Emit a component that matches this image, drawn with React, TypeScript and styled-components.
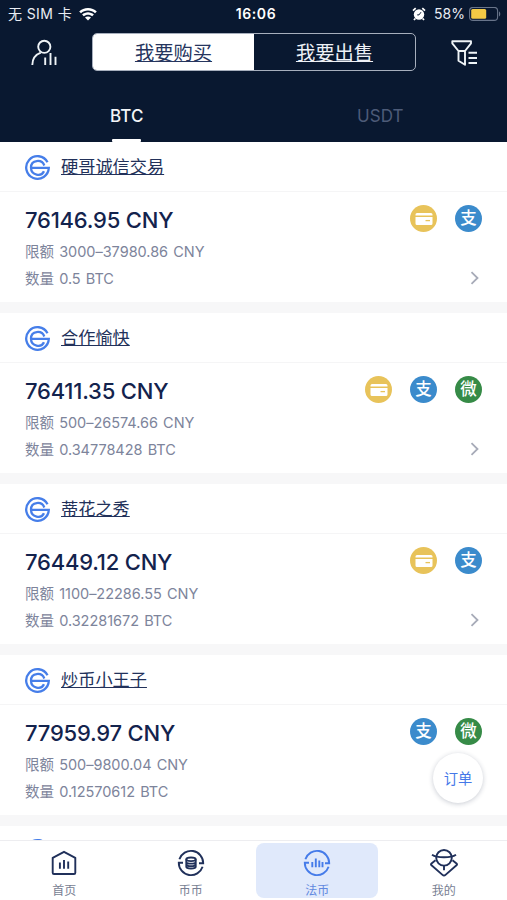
import React from 'react';
import styled, { createGlobalStyle } from 'styled-components';

const GlobalStyle = createGlobalStyle`
  * { box-sizing: border-box; }
  body {
    margin: 0;
    background: #f7f7f8;
    font-family: Inter, "Noto Sans CJK SC", sans-serif;
    color: #13234d;
  }
  svg { display: block; flex: none; }
`;

const Screen = styled.div`
  width: 507px;
  height: 900px;
  overflow: hidden;
  display: flex;
  flex-direction: column;
  position: relative;
`;

const Header = styled.header`
  height: 142px;
  flex: none;
  background: #091830;
  color: #fff;
`;

const StatusBar = styled.div`
  height: 28px;
  padding: 0 6px 0 8px;
  display: grid;
  grid-template-columns: 1fr auto 1fr;
  align-items: center;
  font-size: 14px;
  line-height: 28px;
  color: #e9edf4;
`;

const StatusGroup = styled.div<{ $end?: boolean }>`
  display: flex;
  align-items: center;
  gap: ${p => (p.$end ? 0 : 7)}px;
  justify-content: ${p => (p.$end ? 'flex-end' : 'flex-start')};
  letter-spacing: ${p => (p.$end ? 0 : 0.4)}px;
  white-space: pre;
`;

const Clock = styled.span`
  margin-left: 3px;
  font-weight: 600;
  letter-spacing: 0.55px;
  color: #fff;
`;

const Percent = styled.span`
  margin: 0 3px 0 8px;
`;

const ToolRow = styled.div`
  height: 49px;
  padding: 5px 27px 0 30px;
  display: flex;
  align-items: flex-start;
`;

const IconButton = styled.div`
  flex: none;
  padding-top: 6px;
`;

const Segments = styled.div`
  width: 325px;
  height: 38px;
  margin: 0 34px;
  display: flex;
  border: 1px solid #a7afbd;
  border-radius: 5px;
  overflow: hidden;
`;

const Segment = styled.div<{ $active?: boolean }>`
  flex: 1;
  background: ${p => (p.$active ? '#fff' : 'transparent')};
  color: ${p => (p.$active ? '#26355e' : '#eef1f6')};
  font-size: 19.3px;
  line-height: 38px;
  text-align: center;
  text-decoration: underline;
  text-decoration-thickness: 1px;
  text-underline-offset: 1px;
  text-decoration-skip-ink: none;
`;

const CoinTabs = styled.div`
  height: 65px;
  display: flex;
`;

const CoinTab = styled.div<{ $active?: boolean }>`
  flex: 1;
  display: flex;
  flex-direction: column;
  align-items: center;
  justify-content: space-between;
  padding-top: 28px;
  font-size: 17px;
  line-height: 23px;
  font-weight: ${p => (p.$active ? 500 : 400)};
  color: ${p => (p.$active ? '#f3f5f8' : '#4d5b78')};
  &::after {
    content: '';
    width: 29px;
    height: 3px;
    border-radius: 1px;
    background: ${p => (p.$active ? '#fff' : 'transparent')};
  }
`;

const List = styled.main`
  flex: 1;
  min-height: 0;
  overflow: hidden;
  display: flex;
  flex-direction: column;
  gap: 11px;
`;

const Card = styled.article`
  height: 160px;
  flex: none;
  background: #fff;
`;

const Seller = styled.div`
  height: 50px;
  padding: 1px 25px 0;
  display: flex;
  align-items: center;
  gap: 11px;
  border-bottom: 1px solid #f5f5f6;
`;

const SellerName = styled.span`
  font-size: 17.2px;
  line-height: 24px;
  color: #22315a;
  text-decoration: underline;
  text-decoration-thickness: 1px;
  text-underline-offset: 1px;
  text-decoration-skip-ink: none;
`;

const Offer = styled.div`
  height: 110px;
  padding: 13px 25px 0;
  display: flex;
  justify-content: space-between;
`;

const Price = styled.div`
  height: 30px;
  font-size: 22px;
  line-height: 30px;
  font-weight: 500;
  letter-spacing: -0.2px;
  white-space: nowrap;
`;

const Detail = styled.div`
  height: 27px;
  font-size: 14.5px;
  line-height: 34px;
  letter-spacing: -0.02px;
  word-spacing: 1.1px;
  color: #7d849b;
  white-space: nowrap;
`;

const Side = styled.div`
  display: flex;
  flex-direction: column;
  align-items: flex-end;
  justify-content: space-between;
  padding-bottom: 17px;
`;

const Methods = styled.div`
  display: flex;
  gap: 18px;
`;

const More = styled.div`
  padding-right: 2px;
`;

const methodColor = { card: '#e8c35a', ali: '#3b8bcc', wechat: '#368b47' };
type Method = keyof typeof methodColor;

const Badge = styled.span<{ $kind: Method }>`
  width: 27px;
  height: 27px;
  border-radius: 50%;
  background: ${p => methodColor[p.$kind]};
  color: #fff;
  display: flex;
  align-items: center;
  justify-content: center;
  font-size: 16.5px;
  line-height: 27px;
  font-weight: 500;
`;

const OrderButton = styled.div`
  position: absolute;
  left: 433px;
  top: 753px;
  width: 50px;
  height: 50px;
  border-radius: 50%;
  background: #fff;
  box-shadow: 0 1px 5px rgba(30, 40, 70, 0.24);
  color: #4678e8;
  font-size: 14.3px;
  line-height: 52px;
  text-align: center;
`;

const TabBar = styled.nav`
  height: 60px;
  flex: none;
  padding: 2px 0 2px 1px;
  background: #fff;
  border-top: 1px solid #ededf0;
  display: grid;
  grid-template-columns: repeat(4, 1fr);
`;

const TabItem = styled.div<{ $active?: boolean }>`
  width: 122px;
  height: 55px;
  justify-self: center;
  border-radius: 8px;
  background: ${p => (p.$active ? '#e0e9fb' : 'transparent')};
  color: ${p => (p.$active ? '#457be9' : '#20305a')};
  display: flex;
  flex-direction: column;
  align-items: center;
  padding-top: 6px;
`;

const TabLabel = styled.span<{ $active?: boolean }>`
  margin-top: 6px;
  font-size: 12px;
  line-height: 16px;
  color: ${p => (p.$active ? '#6188df' : '#777e92')};
`;

const Wifi = () => (
  <svg width="18" height="13" viewBox="0 0 18 13" fill="#fff">
    <path d="M9 0C5.5 0 2.4 1.300 0.200 3.500L2 5.300C3.800 3.500 6.300 2.500 9 2.500s5.200 1 7 2.800l1.800-1.800C15.600 1.300 12.500 0 9 0Z" />
    <path d="M9 4.300c-2.300 0-4.300.9-5.900 2.300l1.700 1.700C5.900 7.300 7.400 6.700 9 6.700s3.100.6 4.200 1.600l1.700-1.700C13.300 5.200 11.300 4.300 9 4.300Z" />
    <path d="M9 8.400c-1.200 0-2.200.4-3 1.200l3 3 3-3c-.8-.8-1.800-1.200-3-1.200Z" />
  </svg>
);

const Alarm = () => (
  <svg width="14" height="14" viewBox="0 0 14 14">
    <circle cx="7" cy="7.500" r="5.200" fill="#fff" />
    <path d="M1 3.600 3.700 1.200M13 3.600 10.300 1.200M3.300 11.500 2 13M10.700 11.500 12 13" stroke="#fff" strokeWidth="1.800" />
    <path d="M9 5.200 7 7.900H5.200" stroke="#091830" strokeWidth="1" fill="none" />
  </svg>
);

const Battery = () => (
  <svg width="33" height="15" viewBox="0 0 33 15">
    <rect x="1.600" y=".4" width="28" height="13" rx="3.500" fill="none" stroke="#68748a" strokeWidth="1.100" />
    <rect x="3.200" y="2" width="15" height="9.800" rx="1.500" fill="#f3ca45" />
    <path d="M31 4.500c1.700.6 1.700 4.300 0 5Z" fill="#68748a" />
  </svg>
);

const TraderIcon = () => (
  <svg width="28" height="28" viewBox="0 0 28 28" fill="none" stroke="#eff4f7" strokeWidth="1.900">
    <circle cx="14.300" cy="7.800" r="6.100" />
    <path d="M2.300 26c.1-6.200 3.500-10.500 8.500-12.300M15.200 18.500V26M20.500 14v12M25.500 17.800v8.200" />
  </svg>
);

const FilterIcon = () => (
  <svg width="30" height="28" viewBox="0 0 30 28" fill="none" stroke="#eff4f7" strokeWidth="1.900" strokeLinejoin="round">
    <path d="M2.300 2.300h18.700v2L15 12H8.500L2.300 4.300ZM8.500 12v9.800l6.500 4V12M18.500 13.700h8.500M18.500 19h8.500M18.500 24h8.500" />
  </svg>
);

const Avatar = () => (
  <svg width="25" height="25" viewBox="0 0 25 25" fill="none" stroke="#467ee9" strokeWidth="2.300">
    <path d="M22.500 7.200A11.300 11.300 0 1 0 23.800 12.800H6.500" />
    <path d="M19.300 10.500C17 3.900 6 4.500 6 12.500C6 20.500 16.500 22 19 16.300" />
  </svg>
);

const CardIcon = () => (
  <svg width="18" height="14" viewBox="0 0 18 14">
    <path d="M2 1h14a1.500 1.500 0 0 1 1.500 1.500V3.500H.5V2.500A1.500 1.500 0 0 1 2 1ZM.5 5h17v6.500A1.500 1.500 0 0 1 16 13H2A1.500 1.500 0 0 1 .5 11.500Z" fill="#fff" />
    <path d="M10.500 8.600H15" stroke="#e8c35a" strokeWidth="1.300" />
  </svg>
);

const Chevron = () => (
  <svg width="10" height="14" viewBox="0 0 10 14" fill="none" stroke="#a7abb8" strokeWidth="1.800">
    <path d="m1.500 1.200 6 5.800-6 5.800" />
  </svg>
);

const navSvg = { width: 28, height: 28, viewBox: '0 0 28 28', fill: 'none', stroke: 'currentColor', strokeWidth: 1.900 } as const;

const HomeIcon = () => (
  <svg {...navSvg} strokeLinejoin="round">
    <path d="M2.700 8.800 14 2.800l11.300 6v14.900a1.300 1.300 0 0 1-1.300 1.300H4a1.300 1.300 0 0 1-1.300-1.300Z" />
    <path d="M9.900 13.500v6.200M14 11v8.700M18.200 12.500v7.200" />
  </svg>
);

const Ring = () => (
  <>
    <path d="M2.400 10.300A12.200 12.200 0 0 1 26.200 14.300H22" />
    <path d="M25.600 17.700A12.200 12.200 0 0 1 1.800 13.700H6" />
  </>
);

const SpotIcon = () => (
  <svg {...navSvg}>
    <Ring />
    <ellipse cx="14" cy="10.300" rx="4.700" ry="1.800" />
    <path d="M9.300 10.300v7.500c0 2.300 9.400 2.300 9.400 0v-7.500M9.300 12.900c0 2.300 9.400 2.300 9.400 0M9.300 15.400c0 2.300 9.400 2.300 9.400 0" />
  </svg>
);

const FiatIcon = () => (
  <svg {...navSvg}>
    <Ring />
    <path d="M9.300 13v5.300M12.800 9.500v8.800M16.300 11.600v6.700M19.500 13v5.300" />
  </svg>
);

const MineIcon = () => (
  <svg {...navSvg} strokeLinejoin="round">
    <circle cx="14" cy="8.800" r="7.800" />
    <path d="M2 5.800c5 3.300 19 3.300 24 0" />
    <path d="M5.500 11.300 1.500 14.500c-.7.600-.7 1.200 0 1.800l11 9.600c1 .9 2 .9 3 0l11-9.600c.7-.6.700-1.200 0-1.800l-4-3.200M14 16.600v4.700" />
  </svg>
);

interface Listing {
  name: string;
  price: string;
  limit: string;
  amount: string;
  methods: Method[];
  more: boolean;
}

const listings: Listing[] = [
  { name: '硬哥诚信交易', price: '76146.95', limit: '3000–37980.86', amount: '0.5', methods: ['card', 'ali'], more: true },
  { name: '合作愉快', price: '76411.35', limit: '500–26574.66', amount: '0.34778428', methods: ['card', 'ali', 'wechat'], more: true },
  { name: '蒂花之秀', price: '76449.12', limit: '1100–22286.55', amount: '0.32281672', methods: ['card', 'ali'], more: true },
  { name: '炒币小王子', price: '77959.97', limit: '500–9800.04', amount: '0.12570612', methods: ['ali', 'wechat'], more: false },
];

const glyph = { card: <CardIcon />, ali: '支', wechat: '微' };

const ListingCard = ({ item }: { item: Listing }) => (
  <Card>
    <Seller>
      <Avatar />
      <SellerName>{item.name}</SellerName>
    </Seller>
    <Offer>
      <div>
        <Price>{item.price} CNY</Price>
        <Detail>限额 {item.limit} CNY</Detail>
        <Detail>数量 {item.amount} BTC</Detail>
      </div>
      <Side>
        <Methods>
          {item.methods.map(m => (
            <Badge key={m} $kind={m}>{glyph[m]}</Badge>
          ))}
        </Methods>
        {item.more && <More><Chevron /></More>}
      </Side>
    </Offer>
  </Card>
);

const tabs = [
  { label: '首页', icon: <HomeIcon /> },
  { label: '币币', icon: <SpotIcon /> },
  { label: '法币', icon: <FiatIcon />, active: true },
  { label: '我的', icon: <MineIcon /> },
];

export default function App() {
  return (
    <>
      <GlobalStyle />
      <Screen>
        <Header>
          <StatusBar>
            <StatusGroup>无 SIM 卡<Wifi /></StatusGroup>
            <Clock>16:06</Clock>
            <StatusGroup $end>
              <Alarm />
              <Percent>58%</Percent>
              <Battery />
            </StatusGroup>
          </StatusBar>
          <ToolRow>
            <IconButton><TraderIcon /></IconButton>
            <Segments>
              <Segment $active>我要购买</Segment>
              <Segment>我要出售</Segment>
            </Segments>
            <IconButton><FilterIcon /></IconButton>
          </ToolRow>
          <CoinTabs>
            <CoinTab $active>BTC</CoinTab>
            <CoinTab>USDT</CoinTab>
          </CoinTabs>
        </Header>
        <List>
          {listings.map(item => <ListingCard key={item.name} item={item} />)}
          <Card>
            <Seller><Avatar /></Seller>
          </Card>
        </List>
        <OrderButton>订单</OrderButton>
        <TabBar>
          {tabs.map(t => (
            <TabItem key={t.label} $active={t.active}>
              {t.icon}
              <TabLabel $active={t.active}>{t.label}</TabLabel>
            </TabItem>
          ))}
        </TabBar>
      </Screen>
    </>
  );
}
